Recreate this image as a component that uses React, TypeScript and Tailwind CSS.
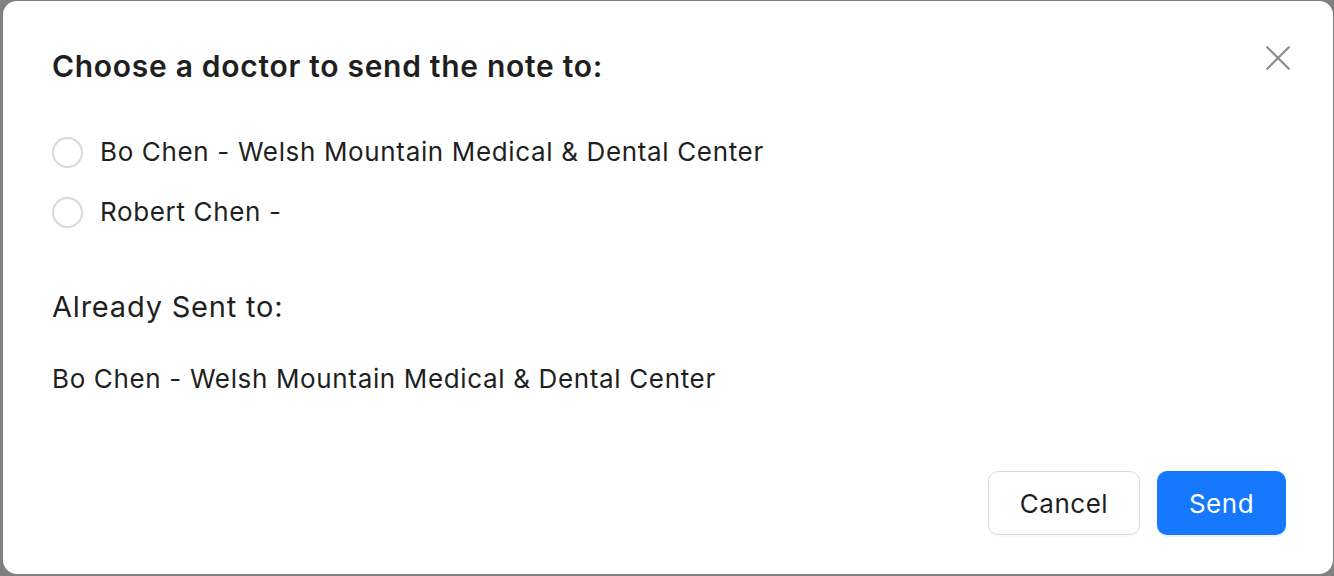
import React from 'react';

const font = { fontFamily: 'Inter, "Noto Sans", sans-serif' };

function Radio({ label }: { label: string }) {
  return (
    <label className="flex items-center h-[60px] cursor-pointer">
      <span className="w-[31px] h-[31px] rounded-full border-2 border-[#d9d9d9] bg-white shrink-0" />
      <span className="ml-[17px] text-[26px] tracking-[0.65px] text-[#1f1f1f] leading-none">{label}</span>
    </label>
  );
}

export default function App() {
  return (
    <div className="w-[1334px] h-[576px] bg-[#808080] pl-[3px] pt-[1px] pr-[1px] pb-[2px]" style={font}>
      <div className="relative h-full w-full bg-white rounded-[14px] flex flex-col pl-[49px] pr-[47px] pb-[39px]">
        <button className="absolute right-[42px] top-[44px] w-[26px] h-[26px] text-[#8c8c8c]">
          <svg viewBox="0 0 24 24" className="w-full h-full" fill="none" stroke="currentColor" strokeWidth="2" strokeLinecap="round">
            <path d="M2 2L22 22M22 2L2 22" />
          </svg>
        </button>
        <h2 className="mt-[50px] text-[30px] font-semibold text-[#1f1f1f] leading-none tracking-[0.7px]">
          Choose a doctor to send the note to:
        </h2>
        <div className="mt-[41px] flex flex-col">
          <Radio label="Bo Chen - Welsh Mountain Medical & Dental Center" />
          <Radio label="Robert Chen -" />
        </div>
        <div className="mt-[50px] text-[29px] tracking-[0.8px] text-[#1f1f1f] leading-none">Already Sent to:</div>
        <div className="mt-[45px] text-[26px] tracking-[0.65px] text-[#1f1f1f] leading-none">
          Bo Chen - Welsh Mountain Medical &amp; Dental Center
        </div>
        <div className="mt-auto flex justify-end gap-[17px]">
          <button className="w-[152px] h-[64px] rounded-[10px] border-[1.5px] border-[#d9d9d9] bg-white text-[26px] tracking-[0.5px] text-[#1f1f1f] shadow-[0_2px_0_rgba(0,0,0,0.02)]">
            Cancel
          </button>
          <button className="w-[129px] h-[64px] rounded-[10px] bg-[#1677ff] text-[26px] tracking-[0.5px] text-white shadow-[0_2px_0_rgba(5,145,255,0.1)]">
            Send
          </button>
        </div>
      </div>
    </div>
  );
}
